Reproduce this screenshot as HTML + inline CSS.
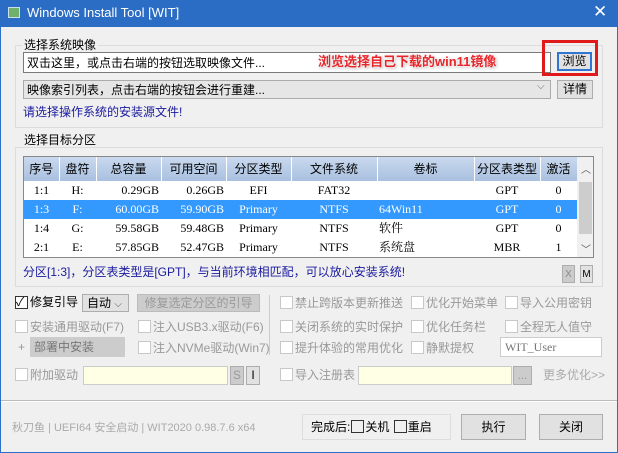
<!DOCTYPE html>
<html><head><meta charset="utf-8"><style>
*{box-sizing:border-box;margin:0;padding:0}
body{width:618px;height:453px;overflow:hidden;background:#f0f0f0;font-family:"Liberation Sans","Noto Sans CJK SC",sans-serif;font-size:12px;color:#000;position:relative}
.a{position:absolute}
.win{left:0;top:0;width:618px;height:453px;border:1px solid #2b6fc6;border-top:none}
.title{left:0;top:0;width:618px;height:27px;background:#2b6dc4;color:#fff;font-size:13px;line-height:25px;padding-left:27px}
.grp{border:1px solid #dcdcdc}
.btn{background:#e1e1e1;border:1px solid #adadad;text-align:center;line-height:17px}
.cb{width:13px;height:13px;border:1px solid #c8c8c8;background:#fff}
.lbl{white-space:nowrap;line-height:14px}
.g{color:#999}
table{border-collapse:collapse;font-family:"Liberation Serif","Noto Serif CJK SC",serif;font-size:12px;table-layout:fixed}
td{height:19px;line-height:17px;text-align:center;padding:0 2px;white-space:nowrap;overflow:hidden}
th{height:24px;line-height:16px;font-weight:normal;font-family:"Liberation Sans","Noto Sans CJK SC",sans-serif;font-size:12px;white-space:nowrap;overflow:hidden;background:linear-gradient(#c9d9ee,#a9c0e0);border-right:1px solid #fff}
.sel td{background:#3399ff;color:#fff}
.r{text-align:right}
</style></head><body>
<div class="a win"></div>
<div class="a title">Windows Install Tool [WIT]</div>
<div class="a" style="left:8px;top:7px;width:12px;height:11px;background:#6fb06a;border:1px solid #cde"></div>
<div class="a" style="left:593px;top:2px;color:#fff;font-size:17px">✕</div>

<div class="a grp" style="left:15px;top:45px;width:588px;height:83px"></div>
<div class="a lbl" style="left:22px;top:38px;background:#f0f0f0;padding:0 2px">选择系统映像</div>
<div class="a lbl" style="left:23px;top:52px;width:528px;height:21px;background:#fff;border:1px solid #7a7a7a;padding:3px 3px">双击这里，或点击右端的按钮选取映像文件...</div>
<div class="a" style="left:318px;top:51px;color:#e8262a;font-weight:bold;font-size:13px;text-shadow:0 0 2px #fff,0 0 2px #fff,1px 1px 3px #999">浏览选择自己下载的win11镜像</div>
<div class="a btn" style="left:557px;top:52px;width:35px;height:19px;border:2px solid #2f75d1;line-height:15px">浏览</div>
<div class="a" style="left:542px;top:40px;width:56px;height:36px;border:3px solid #e01a1a"></div>
<div class="a lbl" style="left:23px;top:80px;width:528px;height:19px;background:#e6e6e6;border:1px solid #ababab;padding:2px 3px">映像索引列表，点击右端的按钮会进行重建...</div>
<div class="a" style="left:537px;top:81px;color:#666;font-size:10px">⌵</div>
<div class="a btn" style="left:557px;top:80px;width:36px;height:19px">详情</div>
<div class="a lbl" style="left:23px;top:105px;color:#1a1a9e">请选择操作系统的安装源文件!</div>

<div class="a grp" style="left:15px;top:147px;width:588px;height:140px"></div>
<div class="a lbl" style="left:22px;top:133px;background:#f0f0f0;padding:0 2px">选择目标分区</div>
<div class="a" style="left:23px;top:156px;width:571px;height:102px;border:1px solid #888;background:#fff;overflow:hidden">
<table style="width:553px">
<colgroup><col style="width:35px"><col style="width:37px"><col style="width:65px"><col style="width:65px"><col style="width:65px"><col style="width:86px"><col style="width:97px"><col style="width:66px"><col style="width:37px"></colgroup>
<tr><th>序号</th><th>盘符</th><th>总容量</th><th>可用空间</th><th>分区类型</th><th>文件系统</th><th>卷标</th><th>分区表类型</th><th>激活</th></tr>
<tr><td>1:1</td><td>H:</td><td class="r">0.29GB</td><td class="r">0.26GB</td><td>EFI</td><td>FAT32</td><td></td><td>GPT</td><td>0</td></tr>
<tr class="sel"><td>1:3</td><td>F:</td><td class="r">60.00GB</td><td class="r">59.90GB</td><td>Primary</td><td>NTFS</td><td style="text-align:left">64Win11</td><td>GPT</td><td>0</td></tr>
<tr><td>1:4</td><td>G:</td><td class="r">59.58GB</td><td class="r">59.48GB</td><td>Primary</td><td>NTFS</td><td style="text-align:left">软件</td><td>GPT</td><td>0</td></tr>
<tr><td>2:1</td><td>E:</td><td class="r">57.85GB</td><td class="r">52.47GB</td><td>Primary</td><td>NTFS</td><td style="text-align:left">系统盘</td><td>MBR</td><td>1</td></tr>
</table>
<div class="a" style="left:553px;top:0;width:17px;height:100px;background:#f0f0f0"></div>
<div class="a" style="left:555px;top:25px;width:13px;height:52px;background:#cdcdcd"></div>
<div class="a" style="left:557px;top:4px;font-size:10px;color:#555">︿</div>
<div class="a" style="left:557px;top:84px;font-size:10px;color:#555">﹀</div>
</div>
<div class="a lbl" style="left:23px;top:265px;color:#1a1a9e">分区[1:3]，分区表类型是[GPT]，与当前环境相匹配，可以放心安装系统!</div>
<div class="a btn" style="left:562px;top:265px;width:13px;height:18px;font-size:10px;color:#888;background:#ccc">X</div>
<div class="a btn" style="left:580px;top:265px;width:13px;height:18px;font-size:10px">M</div>

<div class="a cb" style="left:15px;top:296px;border-color:#333"></div><div class="a" style="left:16px;top:293px;font-size:12px">✓</div>
<div class="a lbl" style="left:30px;top:295px">修复引导</div>
<div class="a lbl" style="left:82px;top:294px;width:47px;height:18px;background:#e1e1e1;border:1px solid #adadad;padding:1px 4px">自动 <span style="color:#555;font-size:10px">⌵</span></div>
<div class="a btn g" style="left:137px;top:294px;width:123px;height:18px;background:#ccc;border-color:#bbb">修复选定分区的引导</div>
<div class="a cb" style="left:15px;top:320px"></div><div class="a lbl g" style="left:30px;top:320px">安装通用驱动(F7)</div>
<div class="a cb" style="left:138px;top:320px"></div><div class="a lbl g" style="left:153px;top:320px">注入USB3.x驱动(F6)</div>
<div class="a g" style="left:18px;top:340px">+</div>
<div class="a lbl" style="left:30px;top:337px;width:95px;height:20px;background:#ccc;color:#777;padding:3px 4px">部署中安装</div>
<div class="a cb" style="left:138px;top:341px"></div><div class="a lbl g" style="left:153px;top:341px">注入NVMe驱动(Win7)</div>
<div class="a" style="left:269px;top:295px;width:1px;height:60px;background:#ccc"></div>
<div class="a cb" style="left:280px;top:296px"></div><div class="a lbl g" style="left:295px;top:296px">禁止跨版本更新推送</div>
<div class="a cb" style="left:411px;top:296px"></div><div class="a lbl g" style="left:426px;top:296px">优化开始菜单</div>
<div class="a cb" style="left:505px;top:296px"></div><div class="a lbl g" style="left:520px;top:296px">导入公用密钥</div>
<div class="a cb" style="left:280px;top:320px"></div><div class="a lbl g" style="left:295px;top:320px">关闭系统的实时保护</div>
<div class="a cb" style="left:411px;top:320px"></div><div class="a lbl g" style="left:426px;top:320px">优化任务栏</div>
<div class="a cb" style="left:505px;top:320px"></div><div class="a lbl g" style="left:520px;top:320px">全程无人值守</div>
<div class="a cb" style="left:280px;top:341px"></div><div class="a lbl g" style="left:295px;top:341px">提升体验的常用优化</div>
<div class="a cb" style="left:411px;top:341px"></div><div class="a lbl g" style="left:426px;top:341px">静默提权</div>
<div class="a" style="left:500px;top:337px;width:102px;height:20px;background:#fff;border:1px solid #ccc;color:#777;padding:2px 4px;font-family:'Liberation Serif',serif">WIT_User</div>
<div class="a cb" style="left:15px;top:368px"></div><div class="a lbl g" style="left:30px;top:368px">附加驱动</div>
<div class="a" style="left:83px;top:366px;width:145px;height:19px;background:#ffffe6;border:1px solid #ccc"></div>
<div class="a btn g" style="left:230px;top:366px;width:14px;height:19px;background:#ccc">S</div>
<div class="a btn" style="left:246px;top:366px;width:14px;height:19px">I</div>
<div class="a cb" style="left:280px;top:368px"></div><div class="a lbl g" style="left:295px;top:368px">导入注册表</div>
<div class="a" style="left:358px;top:366px;width:154px;height:19px;background:#ffffe6;border:1px solid #ccc"></div>
<div class="a btn g" style="left:513px;top:366px;width:19px;height:19px;background:#ccc">...</div>
<div class="a lbl" style="left:543px;top:368px;color:#aaa">更多优化>></div>
<div class="a" style="left:1px;top:400px;width:616px;height:1px;background:#bbb"></div>
<div class="a" style="left:1px;top:401px;width:616px;height:1px;background:#fff"></div>

<div class="a lbl" style="left:12px;top:421px;color:#aaa;font-size:11px">秋刀鱼 | UEFI64 安全启动 | WIT2020 0.98.7.6 x64</div>
<div class="a lbl" style="left:302px;top:414px;width:149px;height:26px;border:1px solid #ddd;padding:5px 8px">完成后:<span style="display:inline-block;width:13px;height:13px;border:1px solid #333;vertical-align:-2px;margin:0 1px"></span>关机 <span style="display:inline-block;width:13px;height:13px;border:1px solid #333;vertical-align:-2px;margin:0 1px"></span>重启</div>
<div class="a btn" style="left:461px;top:414px;width:65px;height:26px;line-height:24px">执行</div>
<div class="a btn" style="left:539px;top:414px;width:64px;height:26px;line-height:24px">关闭</div>
</body></html>
